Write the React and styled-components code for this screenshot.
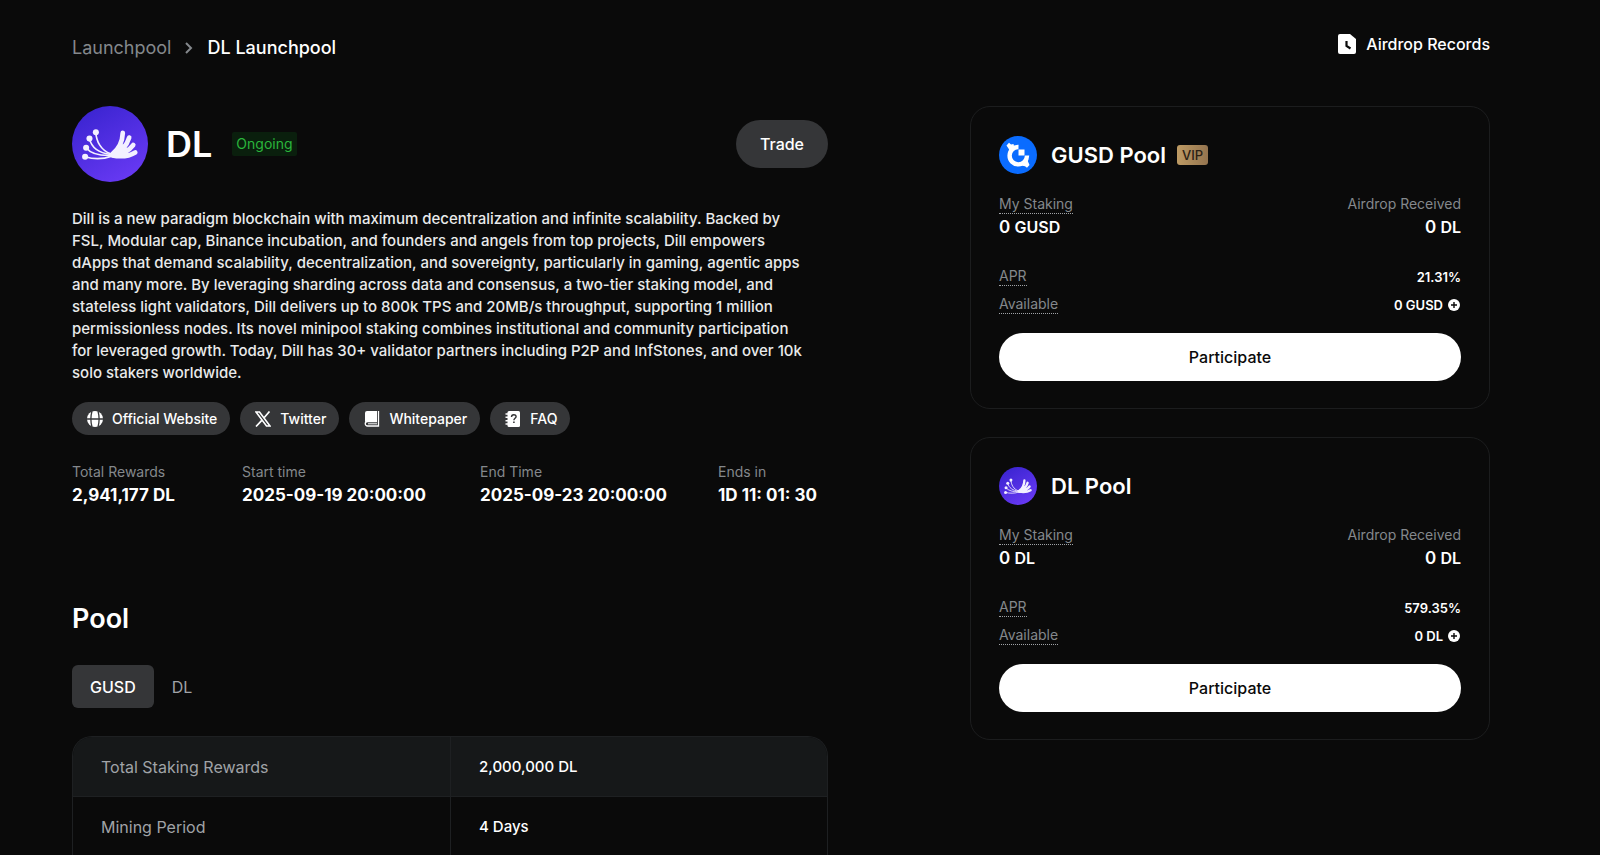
import React, { useState } from "react";
import styled, { createGlobalStyle } from "styled-components";

const GlobalStyle = createGlobalStyle`
  *, *::before, *::after { box-sizing: border-box; }
  body {
    margin: 0;
    background: #0a0a0a;
    color: #fff;
    font-family: Inter, "Liberation Sans", sans-serif;
    font-size: 16px;
  }
  button { font-family: inherit; border: 0; cursor: pointer; }
  a { color: inherit; text-decoration: none; }
  h1, h2, h3, p, dl, dd { margin: 0; }
  svg { display: block; flex: none; }
`;

const Page = styled.div`
  padding: 34px 110px 0 72px;
`;

const Header = styled.header`
  display: flex;
  justify-content: space-between;
  align-items: flex-start;
  margin-bottom: 44px;
`;

const Breadcrumb = styled.nav`
  display: flex;
  align-items: center;
  gap: 12px;
  font-size: 18px;
  line-height: 28px;
`;

const Crumb = styled.a`
  color: ${(p) => (p.$current ? "#fff" : "#84888c")};
  font-weight: ${(p) => (p.$current ? 500 : 400)};
`;

const RecordsLink = styled.a`
  display: flex;
  align-items: center;
  gap: 10px;
  font-weight: 500;
  line-height: 20px;
`;

const Columns = styled.main`
  display: grid;
  grid-template-columns: minmax(0, 756fr) minmax(0, 520fr);
  column-gap: 142px;
  align-items: start;
`;

const Project = styled.section`
  display: flex;
  align-items: center;
`;

const ProjectName = styled.h1`
  margin-left: 18px;
  font-size: 36px;
  line-height: 44px;
  font-weight: 600;
`;

const Status = styled.span`
  margin-left: 20px;
  padding: 0 4px;
  border-radius: 2px;
  background: #0a1f0d;
  color: #2bb53c;
  font-size: 14px;
  line-height: 24px;
`;

const TradeButton = styled.button`
  margin-left: auto;
  height: 48px;
  padding: 0 24px;
  border-radius: 24px;
  background: #353638;
  color: #fff;
  font-size: 16px;
  font-weight: 500;
`;

const Description = styled.p`
  margin-top: 26px;
  color: #e9eaeb;
  font-size: 15px;
  font-weight: 450;
  line-height: 22px;
  white-space: pre-line;
`;

const Links = styled.nav`
  display: flex;
  flex-wrap: wrap;
  gap: 10px;
  margin-top: 18px;
`;

const PillLink = styled.a`
  display: flex;
  align-items: center;
  gap: 9px;
  height: 33px;
  padding: 0 13px 0 15px;
  border-radius: 17px;
  background: #353638;
  font-size: 14px;
  font-weight: 500;
`;

const Stats = styled.dl`
  display: grid;
  grid-template-columns: 170fr 238fr 238fr 110fr;
  margin-top: 27px;
`;

const StatLabel = styled.dt`
  color: #84888c;
  font-size: 14px;
  line-height: 20px;
`;

const StatValue = styled.dd`
  font-size: 17px;
  line-height: 26px;
  font-weight: 700;
`;

const SectionTitle = styled.h2`
  margin-top: 93px;
  font-size: 27px;
  line-height: 36px;
  font-weight: 600;
`;

const Tabs = styled.div`
  display: flex;
  margin: 28px 0;
`;

const Tab = styled.button`
  height: 43px;
  padding: 0 18px;
  border-radius: 6px;
  background: ${(p) => (p.$active ? "#353638" : "transparent")};
  color: ${(p) => (p.$active ? "#fff" : "#a0a3a7")};
  font-size: 16px;
  font-weight: ${(p) => (p.$active ? 500 : 400)};
`;

const PoolTable = styled.table`
  width: 100%;
  table-layout: fixed;
  border: 1px solid #1e2022;
  border-bottom: 0;
  border-spacing: 0;
  border-radius: 20px 20px 0 0;
  overflow: hidden;

  th, td {
    height: 60px;
    padding: 0 28px;
    text-align: left;
    border-bottom: 1px solid #1e2022;
  }
  th { color: #a0a3a7; font-weight: 400; }
  td { border-left: 1px solid #1e2022; font-size: 15px; font-weight: 500; }
  tr:first-child { background: #161819; }
`;

const Cards = styled.aside`
  display: flex;
  flex-direction: column;
  gap: 28px;
`;

const Card = styled.article`
  padding: 29px 28px 27px;
  border: 1px solid #1c1d1e;
  border-radius: 20px;
`;

const CardHead = styled.header`
  display: flex;
  align-items: center;
  margin-bottom: 21px;
`;

const CardTitle = styled.h3`
  margin-left: 14px;
  font-size: 22px;
  line-height: 38px;
  font-weight: 600;
`;

const Vip = styled.span`
  margin-left: 11px;
  padding: 0 5px;
  border-radius: 3px;
  background: linear-gradient(90deg, #be9b64, #94744f);
  color: #2b2115;
  font-size: 13px;
  font-weight: 500;
  line-height: 20px;
`;

const Row = styled.div`
  display: flex;
  justify-content: space-between;
  align-items: center;
  height: ${(p) => (p.$tall ? "24px" : "19px")};
  margin-top: ${(p) => p.$gap || 0}px;
`;

const Label = styled.span`
  color: #84888c;
  font-size: 14px;
  line-height: 18px;
  border-bottom: 1px dotted ${(p) => (p.$hint ? "#a0a3a7" : "transparent")};
`;

const Amount = styled.strong`
  font-size: 17px;
  font-weight: 600;
  small { font-size: 16px; }
`;

const Value = styled.span`
  display: flex;
  align-items: center;
  gap: 5px;
  font-size: 13px;
  font-weight: 600;
`;

const AddButton = styled.button`
  padding: 0 1px 0 0;
  background: none;
  color: #fff;
`;

const Participate = styled.button`
  display: block;
  width: 100%;
  height: 48px;
  margin-top: 19px;
  border-radius: 24px;
  background: #fff;
  color: #0a0a0a;
  font-size: 16px;
  font-weight: 500;
`;

function DlLogo({ size }) {
  const id = "dl-" + size;
  return (
    <svg width={size} height={size} viewBox="0 0 226 226" aria-hidden="true">
      <defs>
        <linearGradient id={id} x1="0.2" y1="0" x2="0.8" y2="1">
          <stop offset="0" stopColor="#3a24d0" />
          <stop offset="1" stopColor="#6a3af5" />
        </linearGradient>
      </defs>
      <circle cx="113" cy="113" r="113" fill={`url(#${id})`} />
      <g fill="none" stroke="#f3f0ff" strokeWidth="5" strokeLinecap="round">
        <path d="M71 78C72 105 86 132 115 142" />
        <path d="M52 97C58 124 82 140 115 144" />
        <path d="M42 124C56 142 84 148 115 147" />
        <path d="M39 151C62 158 94 158 118 149" />
      </g>
      <g fill="none" stroke="#f3f0ff" strokeWidth="14" strokeLinecap="round">
        <path d="M151 80C150 108 142 126 120 143" />
        <path d="M170 94C163 118 148 135 122 144" />
        <path d="M182 116C169 134 150 143 122 146" />
        <path d="M188 138C170 149 146 152 120 147" />
      </g>
      <path d="M116 141C134 132 143 122 148 112L158 118L166 128L168 142C152 152 134 154 116 150Z" fill="#f3f0ff" />
      <g fill="#f3f0ff">
        <circle cx="71" cy="78" r="9" />
        <circle cx="52" cy="97" r="9" />
        <circle cx="42" cy="124" r="9" />
        <circle cx="39" cy="151" r="9" />
      </g>
    </svg>
  );
}

function GusdLogo() {
  return (
    <svg width="38" height="38" viewBox="0 0 38 38" aria-hidden="true">
      <circle cx="19" cy="19" r="19" fill="#0a6cff" />
      <path d="M19.500 11A8.700 8.700 0 1 0 28 19.500" fill="none" stroke="#fff" strokeWidth="4.400" />
      <path d="M19.500 13.500h6v6h-6z" fill="#fff" />
      <path d="M7.500 9.500l2.500-2.700 2 1.700 2.500-.5 1 4-4.500 3.500-1.500-3zM30.500 29l-2.500 2.800-2-1.600-2.500-.4 0-3.800 4.500-3.500 1.200 3.500z" fill="#fff" />
    </svg>
  );
}

const ChevronIcon = () => (
  <svg width="12" height="14" viewBox="0 0 12 14" fill="none" stroke="#84888c" strokeWidth="2" aria-hidden="true">
    <path d="M3 2l5 5-5 5" />
  </svg>
);

const RecordsIcon = () => (
  <svg width="18" height="20" viewBox="0 0 18 20" aria-hidden="true">
    <path fill="#fff" d="M2 0h10l6 5v13a2 2 0 0 1-2 2H2a2 2 0 0 1-2-2V2a2 2 0 0 1 2-2z" />
    <path d="M8.500 7v5l4 2.500" fill="none" stroke="#0a0a0a" strokeWidth="2.200" />
  </svg>
);

const GlobeIcon = () => (
  <svg width="16" height="16" viewBox="0 0 16 16" aria-hidden="true">
    <circle cx="8" cy="8" r="8" fill="#fff" />
    <g fill="none" stroke="#353638" strokeWidth="1.300">
      <path d="M0 8h16M5 0C3.600 5 3.600 11 5 16M11 0c1.400 5 1.400 11 0 16" />
    </g>
  </svg>
);

const XIcon = () => (
  <svg width="16" height="16" viewBox="0 0 16 16" aria-hidden="true">
    <path d="M1 1h3.500L15 15h-3.500z" fill="none" stroke="#fff" strokeWidth="1.600" />
    <path d="M14.500 .5L9.100 6.800M6.800 9.300L1 15.500" stroke="#fff" strokeWidth="1.700" />
  </svg>
);

const BookIcon = () => (
  <svg width="16" height="16" viewBox="0 0 16 16" aria-hidden="true">
    <path fill="#fff" d="M3 0h10v10H3.500C2 10 1 11 1 12.500V2a2 2 0 0 1 2-2z" />
    <path d="M14.500 0v15H3.500a2 2 0 0 1 0-4.500H13" fill="none" stroke="#fff" strokeWidth="1.300" />
    <path d="M4 12.800h9" stroke="#fff" strokeWidth="1" />
  </svg>
);

const FaqIcon = () => (
  <svg width="16" height="16" viewBox="0 0 16 16" aria-hidden="true">
    <rect x="2.500" width="12.500" height="16" rx="1.500" fill="#fff" />
    <path d="M0.500 3h4M0.500 6.300h4M0.500 9.700h4M0.500 13h4" stroke="#fff" strokeWidth="1.400" />
    <path d="M6.500 6c0-3 4.600-3 4.600-.4 0 1.700-2.200 1.700-2.200 3.600" fill="none" stroke="#353638" strokeWidth="1.400" />
    <path d="M8.100 10.500h1.600v1.600H8.100z" fill="#353638" />
  </svg>
);

const PlusIcon = () => (
  <svg width="12" height="12" viewBox="0 0 12 12" aria-hidden="true">
    <circle cx="6" cy="6" r="6" fill="#fff" />
    <path d="M6 3v6M3 6h6" stroke="#0a0a0a" strokeWidth="1.400" />
  </svg>
);

const description = [
  "Dill is a new paradigm blockchain with maximum decentralization and infinite scalability. Backed by",
  "FSL, Modular cap, Binance incubation, and founders and angels from top projects, Dill empowers",
  "dApps that demand scalability, decentralization, and sovereignty, particularly in gaming, agentic apps",
  "and many more. By leveraging sharding across data and consensus, a two-tier staking model, and",
  "stateless light validators, Dill delivers up to 800k TPS and 20MB/s throughput, supporting 1 million",
  "permissionless nodes. Its novel minipool staking combines institutional and community participation",
  "for leveraged growth. Today, Dill has 30+ validator partners including P2P and InfStones, and over 10k",
  "solo stakers worldwide.",
].join("\n");

const links = [
  ["Official Website", GlobeIcon],
  ["Twitter", XIcon],
  ["Whitepaper", BookIcon],
  ["FAQ", FaqIcon],
];

const stats = [
  ["Total Rewards", "2,941,177 DL"],
  ["Start time", "2025-09-19 20:00:00"],
  ["End Time", "2025-09-23 20:00:00"],
  ["Ends in", "1D 11: 01: 30"],
];

function PoolCard({ logo, token, apr, vip }) {
  return (
    <Card>
      <CardHead>
        {logo}
        <CardTitle>{token} Pool</CardTitle>
        {vip && <Vip>VIP</Vip>}
      </CardHead>
      <Row>
        <Label $hint>My Staking</Label>
        <Label>Airdrop Received</Label>
      </Row>
      <Row $tall $gap={1}>
        <Amount>0 <small>{token}</small></Amount>
        <Amount>0 <small>DL</small></Amount>
      </Row>
      <Row $gap={28}>
        <Label $hint>APR</Label>
        <Value>{apr}</Value>
      </Row>
      <Row $gap={9}>
        <Label $hint>Available</Label>
        <Value>
          0 {token}
          <AddButton aria-label={`Add ${token}`}><PlusIcon /></AddButton>
        </Value>
      </Row>
      <Participate>Participate</Participate>
    </Card>
  );
}

export default function App() {
  const [tab, setTab] = useState("GUSD");
  return (
    <Page>
      <GlobalStyle />
      <Header>
        <Breadcrumb aria-label="Breadcrumb">
          <Crumb href="#launchpool">Launchpool</Crumb>
          <ChevronIcon />
          <Crumb href="#dl" $current aria-current="page">DL Launchpool</Crumb>
        </Breadcrumb>
        <RecordsLink href="#records"><RecordsIcon />Airdrop Records</RecordsLink>
      </Header>
      <Columns>
        <div>
          <Project>
            <DlLogo size={76} />
            <ProjectName>DL</ProjectName>
            <Status>Ongoing</Status>
            <TradeButton>Trade</TradeButton>
          </Project>
          <Description>{description}</Description>
          <Links aria-label="Project links">
            {links.map(([text, Icon]) => (
              <PillLink href="#link" key={text}><Icon />{text}</PillLink>
            ))}
          </Links>
          <Stats>
            {stats.map(([label, value]) => (
              <div key={label}>
                <StatLabel>{label}</StatLabel>
                <StatValue>{value}</StatValue>
              </div>
            ))}
          </Stats>
          <SectionTitle>Pool</SectionTitle>
          <Tabs role="tablist">
            {["GUSD", "DL"].map((name) => (
              <Tab key={name} role="tab" aria-selected={tab === name} $active={tab === name} onClick={() => setTab(name)}>
                {name}
              </Tab>
            ))}
          </Tabs>
          <PoolTable>
            <tbody>
              <tr><th scope="row">Total Staking Rewards</th><td>2,000,000 DL</td></tr>
              <tr><th scope="row">Mining Period</th><td>4 Days</td></tr>
            </tbody>
          </PoolTable>
        </div>
        <Cards>
          <PoolCard logo={<GusdLogo />} token="GUSD" apr="21.31%" vip />
          <PoolCard logo={<DlLogo size={38} />} token="DL" apr="579.35%" />
        </Cards>
      </Columns>
    </Page>
  );
}
